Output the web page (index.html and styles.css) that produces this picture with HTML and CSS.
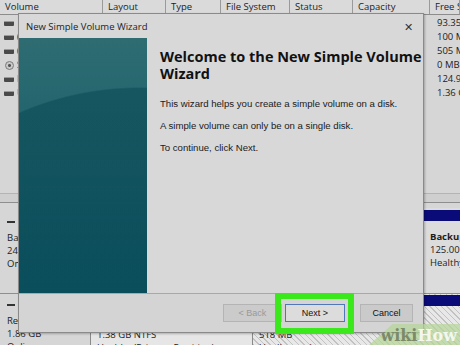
FILE: index.html
```html
<!DOCTYPE html>
<html lang="en">
<head>
  <meta charset="UTF-8">
  <meta name="viewport" content="width=device-width, initial-scale=1.0">
  <title>Disk Management - New Simple Volume Wizard</title>
  <link rel="stylesheet" href="styles.css">
</head>
<body>
  <div class="screen">
    <div class="dm">
      <div class="dm-head">
        <div class="cell">Volume</div>
        <div class="cell">Layout</div>
        <div class="cell">Type</div>
        <div class="cell">File System</div>
        <div class="cell">Status</div>
        <div class="cell">Capacity</div>
        <div class="cell">Free Space</div>
      </div>

      <div class="dm-list">
        <div class="row"><div class="cell"><span class="drive"></span> &nbsp;Windows (C:)</div><div class="cell free">93.35 GB</div></div>
        <div class="row"><div class="cell"><span class="drive"></span>(Disk 0 partition 1)</div><div class="cell free">100 MB</div></div>
        <div class="row"><div class="cell"><span class="drive"></span>(Disk 0 partition 4)</div><div class="cell free">505 MB</div></div>
        <div class="row"><div class="cell"><span class="disc"></span>SSS_X64FRE (D:)</div><div class="cell free">0 MB</div></div>
        <div class="row"><div class="cell"><span class="drive"></span>Backup (E:)</div><div class="cell free">124.95 GB</div></div>
        <div class="row"><div class="cell"><span class="drive"></span>USB (F:)</div><div class="cell free">1.36 GB</div></div>
      </div>

      <div class="dm-split"></div>

      <div class="dm-disks">
        <div class="disk">
          <div class="disk-label">
            <div><span class="dash"></span> Disk 0</div>
            <div>Basic</div>
            <div>249.43 GB</div>
            <div>Online</div>
          </div>
          <div class="part part-wide">
            <div class="part-bar"></div>
            <div class="part-name">Windows (C:)</div>
            <div>124.00 GB NTFS</div>
            <div>Healthy (Boot, Page File)</div>
          </div>
          <div class="part">
            <div class="part-bar"></div>
            <div class="part-name">Backup (E:)</div>
            <div>125.00 GB NTFS</div>
            <div>Healthy (Primary Partition)</div>
          </div>
        </div>
        <div class="disk disk-second">
          <div class="disk-label">
            <div><span class="dash"></span> Disk 1</div>
            <div>Removable</div>
            <div>1.86 GB</div>
            <div>Online</div>
          </div>
          <div class="part part-usb">
            <div class="part-bar"></div>
            <div class="part-name">USB (F:)</div>
            <div>1.38 GB NTFS</div>
            <div>Healthy (Primary Partition)</div>
          </div>
          <div class="part part-free">
            <div class="part-bar"></div>
            <div class="part-name">&nbsp;</div>
            <div>518 MB</div>
            <div>Unallocated</div>
          </div>
        </div>
      </div>
    </div>

    <div class="wizard">
      <div class="wiz-title">
        <span>New Simple Volume Wizard</span>
        <span class="wiz-close">&#x2715;</span>
      </div>
      <div class="wiz-body">
        <div class="wiz-art"></div>
        <div class="wiz-text">
          <h1>Welcome to the New Simple Volume<br>Wizard</h1>
          <p>This wizard helps you create a simple volume on a disk.</p>
          <p>A simple volume can only be on a single disk.</p>
          <p>To continue, click Next.</p>
        </div>
      </div>
      <div class="wiz-foot">
        <button class="btn" disabled>&lt; Back</button>
        <button class="btn btn-next">Next &gt;</button>
        <button class="btn btn-cancel">Cancel</button>
      </div>
    </div>

    <div class="highlight"></div>

    <div class="wikihow"><span class="wiki">wiki</span>How</div>
  </div>
</body>
</html>
```

FILE: styles.css
```css
body {
  margin: 0;
  font-family: "Open Sans", "Noto Sans", sans-serif;
  background: #d2d2d2;
  color: #1c1c1c;
}
.screen {
  position: relative;
  width: 460px;
  height: 345px;
  overflow: hidden;
}

/* background: disk management */
.dm {
  font-size: 9.5px;
}
.dm-head, .dm-list .row {
  display: grid;
  grid-template-columns: 103px 63px 55px 69px 63px 77px 30px;
}
.dm-head {
  height: 14px;
  line-height: 14px;
  background: #dadada;
  border-bottom: 1px solid #8c8c8c;
}
.dm-head .cell {
  padding-left: 5px;
  border-right: 1px solid #9a9a9a;
  white-space: nowrap;
  overflow: hidden;
}
.dm-list {
  height: 177px;
  padding-top: 1px;
  background: #d6d6d6;
}
.dm-list .row {
  height: 14px;
  line-height: 14px;
}
.dm-list .cell {
  white-space: nowrap;
  overflow: hidden;
  display: flex;
  align-items: center;
}
.dm-list .row .free {
  grid-column: 7;
  padding-left: 7px;
}
.drive {
  display: inline-block;
  width: 10px;
  height: 4px;
  margin: 0 3px 0 4px;
  background: #4a4a4a;
  border-top: 1px solid #9a9a9a;
  border-radius: 1px;
}
.disc {
  display: inline-block;
  width: 9px;
  height: 9px;
  margin: 0 3px 0 5px;
  border: 1px solid #7a7a7a;
  border-radius: 50%;
  background: radial-gradient(circle, #555 0 1px, #c9c9c9 2px);
  box-sizing: border-box;
}
.dm-split {
  height: 8px;
  background: #cfcfcf;
  border-top: 1px solid #b4b4b4;
  border-bottom: 1px solid #8e8e8e;
}
.dm-disks {
  padding-top: 5px;
  background: #d6d6d6;
}
.disk {
  display: flex;
  height: 85px;
  border-bottom: 1px solid #8e8e8e;
}
.disk-label {
  width: 83px;
  padding: 7px 0 0 7px;
  line-height: 13px;
}
.disk-label div:first-child {
  margin-bottom: 3px;
}
.dash {
  display: inline-block;
  width: 8px;
  height: 2px;
  vertical-align: middle;
  background: #333;
}
.part {
  flex: 1;
  padding: 2px 0 0 6px;
  line-height: 13px;
  white-space: nowrap;
  overflow: hidden;
  background: #dcdcdc;
  border-left: 1px solid #8a8a8a;
}
.part-wide {
  flex: 0 0 326px;
}
.part-bar {
  height: 11px;
  margin: 0 0 9px -6px;
  background: #0a0a78;
}
.part-name {
  font-weight: bold;
}
.disk-second .disk-label {
  padding-top: 4px;
}
.disk-second .part {
  padding-top: 1px;
}
.part-usb {
  flex: 0 0 155px;
  background: #e6e6e6;
}
.part-free {
  background: repeating-linear-gradient(45deg, #c2c2c2 0 1px, #e8e8e8 1px 4px);
}

/* wizard dialog */
.wizard {
  position: absolute;
  left: 18px;
  top: 13px;
  width: 404px;
  height: 318px;
  display: flex;
  flex-direction: column;
  background: #d8d8d8;
  border: 1px solid #8a8a8a;
  box-shadow: 1px 1px 2px rgba(0, 0, 0, 0.25);
}
.wiz-title {
  height: 24px;
  display: flex;
  align-items: center;
  justify-content: space-between;
  padding: 0 10px 0 7px;
  font-size: 9.5px;
  color: #222;
}
.wiz-close {
  font-size: 11px;
  color: #333;
}
.wiz-body {
  flex: 1;
  display: flex;
}
.wiz-art {
  width: 128px;
  background:
    radial-gradient(circle 300px at 120px 349px, rgba(8, 72, 84, 0.55) 99.5%, transparent 100%),
    linear-gradient(#2e6c72, #0d5564);
}
.wiz-text {
  flex: 1;
  padding: 10px 0 0 13px;
}
.wiz-text h1 {
  margin: 0 0 16px;
  font-family: "Open Sans", sans-serif;
  font-size: 14.5px;
  line-height: 17px;
  font-weight: bold;
  white-space: nowrap;
  color: #111;
}
.wiz-text p {
  margin: 0 0 10px;
  font-family: "Liberation Sans", Arial, sans-serif;
  font-size: 9.6px;
  line-height: 12px;
  color: #1a1a1a;
}
.wiz-foot {
  height: 38px;
  display: flex;
  align-items: center;
  justify-content: flex-end;
  padding-right: 10px;
  border-top: 1px solid #a8a8a8;
  background: #d4d4d4;
}
.btn {
  height: 18px;
  padding: 0;
  font-family: "Liberation Sans", Arial, sans-serif;
  font-size: 9px;
  color: #111;
  background: #cacaca;
  border: 1px solid #b4b4b4;
}
.btn[disabled] {
  width: 59px;
  color: #9a9a9a;
  background: #cbcbcb;
}
.btn-next {
  width: 60px;
  margin-left: 3px;
  background: #dcdcdc;
  border: 1px solid #5277b8;
}
.btn-cancel {
  width: 53px;
  margin-left: 15px;
}

/* annotation overlays */
.highlight {
  position: absolute;
  left: 275px;
  top: 293px;
  width: 67px;
  height: 29px;
  border: 6px solid #3ae81c;
}
.wikihow {
  position: absolute;
  right: 0;
  bottom: 0;
  width: 88px;
  height: 21px;
  font-family: "DejaVu Serif", Georgia, serif;
  font-weight: bold;
  font-size: 16px;
  line-height: 23px;
  color: #f4f7ee;
  text-align: right;
  padding-right: 3px;
  background: rgba(180, 214, 150, 0.7);
  clip-path: polygon(26% 0, 100% 0, 100% 100%, 0 100%);
}
.wikihow .wiki {
  color: #7c8a6a;
}
```
